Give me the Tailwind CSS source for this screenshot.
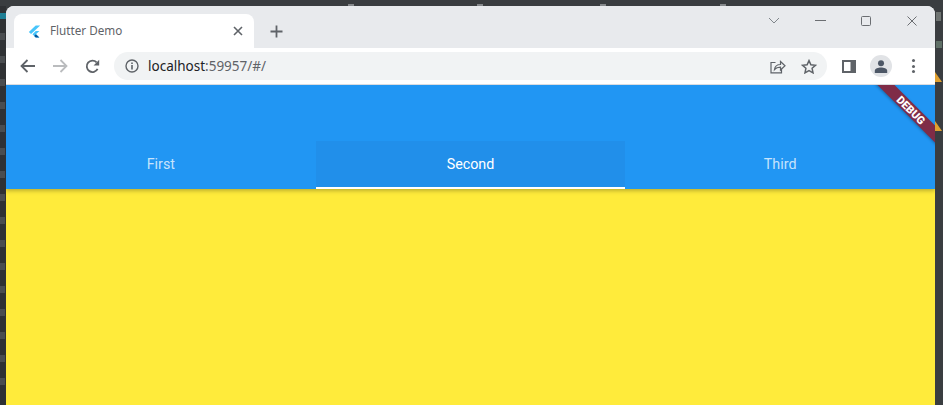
<!DOCTYPE html>
<html lang="en">
<head>
<meta charset="UTF-8">
<title>Flutter Demo</title>
<script src="https://cdn.jsdelivr.net/npm/@tailwindcss/browser@4"></script>
</head>
<body class="bg-[#3a3d40] w-[943px] h-[405px] overflow-hidden font-['Roboto',sans-serif]">
  <div class="relative flex pt-[6px] h-[405px]">
    <!-- ticks of the editor behind the browser -->
    <div class="absolute top-[4px] left-[348px] w-[6px] h-[2px] bg-[#85888b]"></div>
    <div class="absolute top-[4px] left-[477px] w-[6px] h-[2px] bg-[#85888b]"></div>
    <div class="absolute top-[4px] left-[600px] w-[6px] h-[2px] bg-[#85888b]"></div>
    <div class="absolute top-[4px] left-[720px] w-[6px] h-[2px] bg-[#85888b]"></div>

    <!-- editor gutter peeking out behind the browser, too cut off to read -->
    <div class="w-[6px] bg-[#2f3134] overflow-hidden flex flex-col items-start gap-[16px]">
      <div class="h-[6px] w-[6px] mt-[7px] bg-[#1f7f95] shrink-0 mb-[-2px]"></div>
      <div class="h-[7px] w-[5px] bg-[#4a4d50] shrink-0"></div>
      <div class="h-[7px] w-[5px] bg-[#4a4d50] shrink-0"></div>
      <div class="h-[7px] w-[5px] bg-[#4a4d50] shrink-0"></div>
      <div class="h-[7px] w-[5px] bg-[#4a4d50] shrink-0"></div>
      <div class="h-[7px] w-[5px] bg-[#4a4d50] shrink-0"></div>
      <div class="h-[7px] w-[5px] bg-[#4a4d50] shrink-0"></div>
      <div class="h-[7px] w-[5px] bg-[#4a4d50] shrink-0"></div>
      <div class="h-[7px] w-[5px] bg-[#4a4d50] shrink-0"></div>
      <div class="h-[7px] w-[5px] bg-[#4a4d50] shrink-0"></div>
      <div class="h-[7px] w-[5px] bg-[#4a4d50] shrink-0"></div>
      <div class="h-[7px] w-[5px] bg-[#4a4d50] shrink-0"></div>
      <div class="h-[7px] w-[5px] bg-[#4a4d50] shrink-0"></div>
      <div class="h-[7px] w-[5px] bg-[#4a4d50] shrink-0"></div>
      <div class="h-[7px] w-[5px] bg-[#4a4d50] shrink-0"></div>
      <div class="h-[7px] w-[5px] bg-[#4a4d50] shrink-0"></div>
      <div class="h-[7px] w-[5px] bg-[#4a4d50] shrink-0"></div>
    </div>

    <div class="w-[929px] flex flex-col rounded-t-lg overflow-hidden bg-white">
      <!-- tab strip -->
      <div class="h-[42px] bg-[#e8eaed] flex items-end pl-2 shrink-0">
        <div class="w-[240px] h-[34px] bg-white rounded-t-lg flex items-center pl-[14px] pr-[11px]">
          <svg width="13" height="13" viewBox="0 0 16 16">
            <path d="M9.5 0.5 L1 8.5 L3.8 11 L15 0.5Z" fill="#47c5fb"/>
            <path d="M9.5 7.5 L5.5 11.5 L9.5 15.5 L14 15.5 L9.8 11.3 L14 7.5Z" fill="#47c5fb"/>
            <path d="M7.6 13.4 L9.8 11.3 L14 15.5 L9.5 15.5Z" fill="#00569e"/>
          </svg>
          <span class="ml-[9px] text-[11.7px] text-[#5f6368] font-['Noto_Sans',sans-serif]">Flutter Demo</span>
          <svg class="ml-auto" width="10" height="10" viewBox="0 0 10 10" stroke="#5f6368" stroke-width="1.6" fill="none"><path d="M1 1 L9 9 M9 1 L1 9"/></svg>
        </div>
        <svg class="ml-[16px] mb-[10px]" width="13" height="13" viewBox="0 0 13 13" stroke="#5f6368" stroke-width="1.8" fill="none"><path d="M6.5 0.5 V12.5 M0.5 6.5 H12.5"/></svg>
        <div class="ml-auto self-start flex items-center h-[29px]">
          <svg class="mr-[35px]" width="12" height="7" viewBox="0 0 12 7" stroke="#80868b" fill="none"><path d="M1 1 L6 6 L11 1"/></svg>
          <svg class="mr-[35px]" width="11" height="1" viewBox="0 0 11 1"><path d="M0 0 H11 V1 H0Z" fill="#6b6e72"/></svg>
          <svg class="mr-[36px]" width="10" height="10" viewBox="0 0 10 10" stroke="#6b6e72" fill="none"><rect x="0.5" y="0.5" width="9" height="9" rx="1"/></svg>
          <svg class="mr-[18px]" width="10" height="10" viewBox="0 0 10 10" stroke="#6b6e72" fill="none"><path d="M0.5 0.5 L9.5 9.5 M9.5 0.5 L0.5 9.5"/></svg>
        </div>
      </div>

      <!-- toolbar -->
      <div class="h-[37px] bg-white border-b border-[#dadce0] flex items-center shrink-0 pl-[14px]">
        <svg width="15" height="14" viewBox="0 0 15 14" stroke="#5f6368" stroke-width="1.8" fill="none"><path d="M15 7 H1.5 M7.5 1 L1.5 7 L7.5 13"/></svg>
        <svg class="ml-[18px]" width="15" height="14" viewBox="0 0 15 14" stroke="#babcbe" stroke-width="1.8" fill="none"><path d="M0 7 H13.5 M7.5 1 L13.5 7 L7.5 13"/></svg>
        <svg class="ml-[17px]" width="15" height="15" viewBox="0 0 15 15" fill="none"><path d="M12.6 9.8 A5.7 5.7 0 1 1 11.6 3.4" stroke="#5f6368" stroke-width="1.8"/><path d="M14.2 0.8 V6.4 H8.6Z" fill="#5f6368"/></svg>
        <div class="ml-[14px] w-[713px] h-[28px] rounded-full bg-[#f1f3f4] flex items-center pl-[11px] pr-[10px]">
          <svg width="14" height="14" viewBox="0 0 14 14" fill="none"><circle cx="7" cy="7" r="6" stroke="#5f6368" stroke-width="1.4"/><path d="M6.2 6 H7.8 V10.5 H6.2Z M6.2 3.4 H7.8 V5 H6.2Z" fill="#5f6368"/></svg>
          <span class="ml-[9px] text-[13.5px] text-[#202124] font-['Noto_Sans',sans-serif]">localhost<span class="text-[#5f6368]">:59957/#/</span></span>
          <svg class="ml-auto" width="16" height="15" viewBox="0 0 16 15" fill="none" stroke="#5f6368" stroke-width="1.2"><path d="M5.5 3.5 H1 V13.8 H11.5 V10"/><path d="M4.5 10.5 C5 7 7.5 5.5 10.5 5.5 V2.5 L15 6.8 L10.5 11 V8.2 C8 8.2 6 8.8 4.5 10.5Z"/></svg>
          <svg class="ml-[15px]" width="16" height="15" viewBox="0 0 16 15" fill="none" stroke="#5f6368" stroke-width="1.5"><path d="M8 1.6 L9.9 5.8 L14.5 6.3 L11.1 9.3 L12 13.8 L8 11.5 L4 13.8 L4.9 9.3 L1.5 6.3 L6.1 5.8Z"/></svg>
        </div>
        <svg class="ml-[15px]" width="14" height="13" viewBox="0 0 14 13"><path d="M0 0 H14 V13 H0Z M2 2 V11 H8.5 V2Z" fill="#5f6368" fill-rule="evenodd"/></svg>
        <div class="ml-[14px] w-[22px] h-[22px] rounded-full bg-[#e1e3e6] flex items-center justify-center">
          <svg width="14" height="13" viewBox="0 0 14 13" fill="#4d5766"><circle cx="7" cy="3.2" r="3"/><path d="M0.8 13 V10.8 C0.8 8.8 4.2 7.6 7 7.6 C9.8 7.6 13.2 8.8 13.2 10.8 V13Z"/></svg>
        </div>
        <div class="ml-[20px] flex flex-col gap-[2.5px]">
          <div class="w-[3px] h-[3px] rounded-full bg-[#5f6368]"></div>
          <div class="w-[3px] h-[3px] rounded-full bg-[#5f6368]"></div>
          <div class="w-[3px] h-[3px] rounded-full bg-[#5f6368]"></div>
        </div>
      </div>

      <!-- flutter app -->
      <div class="relative flex-1 flex flex-col bg-[#ffeb3b] overflow-hidden">
        <div class="bg-[#2196f3] pt-[56px] shadow-[0_2px_4px_rgba(0,0,0,0.25)] relative">
          <div class="grid grid-cols-3 h-[48px] text-[14.3px] font-normal">
            <div class="flex items-center justify-center text-white/75">First</div>
            <div class="flex items-center justify-center text-white bg-[#218fea] border-b-2 border-white pt-[1px]">Second</div>
            <div class="flex items-center justify-center text-white/75">Third</div>
          </div>
        </div>
        <!-- debug banner -->
        <div class="absolute top-[19px] right-[-21px] w-[90px] h-[12px] rotate-45 bg-[#7f2c47] shadow-[0_1px_3px_rgba(0,0,0,0.3)] flex items-center justify-center text-white text-[11px] leading-none font-black">DEBUG</div>
      </div>
    </div>

    <!-- editor gutter on the right, with its warning markers -->
    <div class="relative w-[8px] bg-[#3a3d40] overflow-hidden">
      <div class="absolute top-[6px] left-[1px] w-[5px] h-[9px] bg-[#6f7472]"></div>
      <div class="absolute top-[35px] left-[1px] w-[6px] h-[7px] bg-[#5f6f66]"></div>
      <svg class="absolute top-[66px] left-0" width="8" height="10" viewBox="0 0 8 10"><path d="M0 0 L7 10 H0Z" fill="#e0a030"/></svg>
      <svg class="absolute top-[115px] left-0" width="8" height="10" viewBox="0 0 8 10"><path d="M0 0 L7 10 H0Z" fill="#e0a030"/></svg>
    </div>
  </div>
</body>
</html>
